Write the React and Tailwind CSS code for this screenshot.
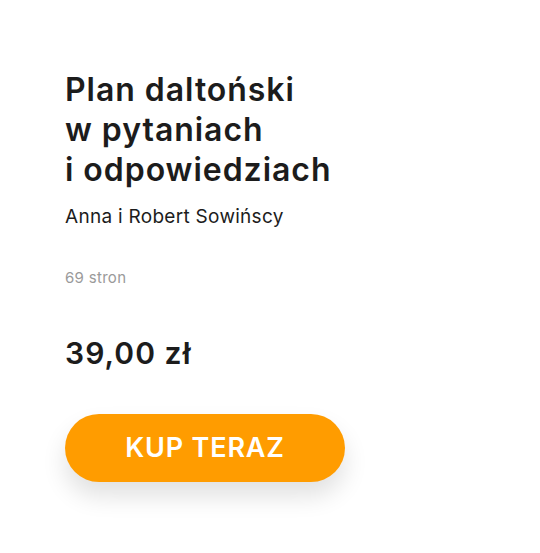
import React from 'react';

export default function App() {
  return (
    <div className="min-h-[553px] w-[540px] bg-white font-['Inter',sans-serif] text-[#1c1c1c]">
      <div className="flex flex-col px-[65px] pt-[70px]">
        {/* Tytuł książki */}
        <h1 className="text-[32px] font-semibold leading-[40px] tracking-[0.03em]">
          Plan daltoński
          <br />
          w pytaniach
          <br />
          i odpowiedziach
        </h1>
        <p className="mt-[14px] text-[19px] leading-[26px] tracking-[0.015em]">Anna i Robert Sowińscy</p>
        <p className="mt-[38px] text-[15px] leading-[20px] tracking-[0.02em] text-[#9a9a9a]">69 stron</p>

        {/* Cena */}
        <p className="mt-[47px] text-[30px] font-semibold leading-[36px] tracking-[0.035em]">39,00 zł</p>

        <button className="mt-[43px] flex h-[68px] w-[280px] items-center justify-center rounded-full bg-[#ff9c00] text-[27px] font-semibold tracking-[0.03em] text-white shadow-[0_14px_24px_rgba(0,0,0,0.12)]">
          KUP TERAZ
        </button>
      </div>
    </div>
  );
}
